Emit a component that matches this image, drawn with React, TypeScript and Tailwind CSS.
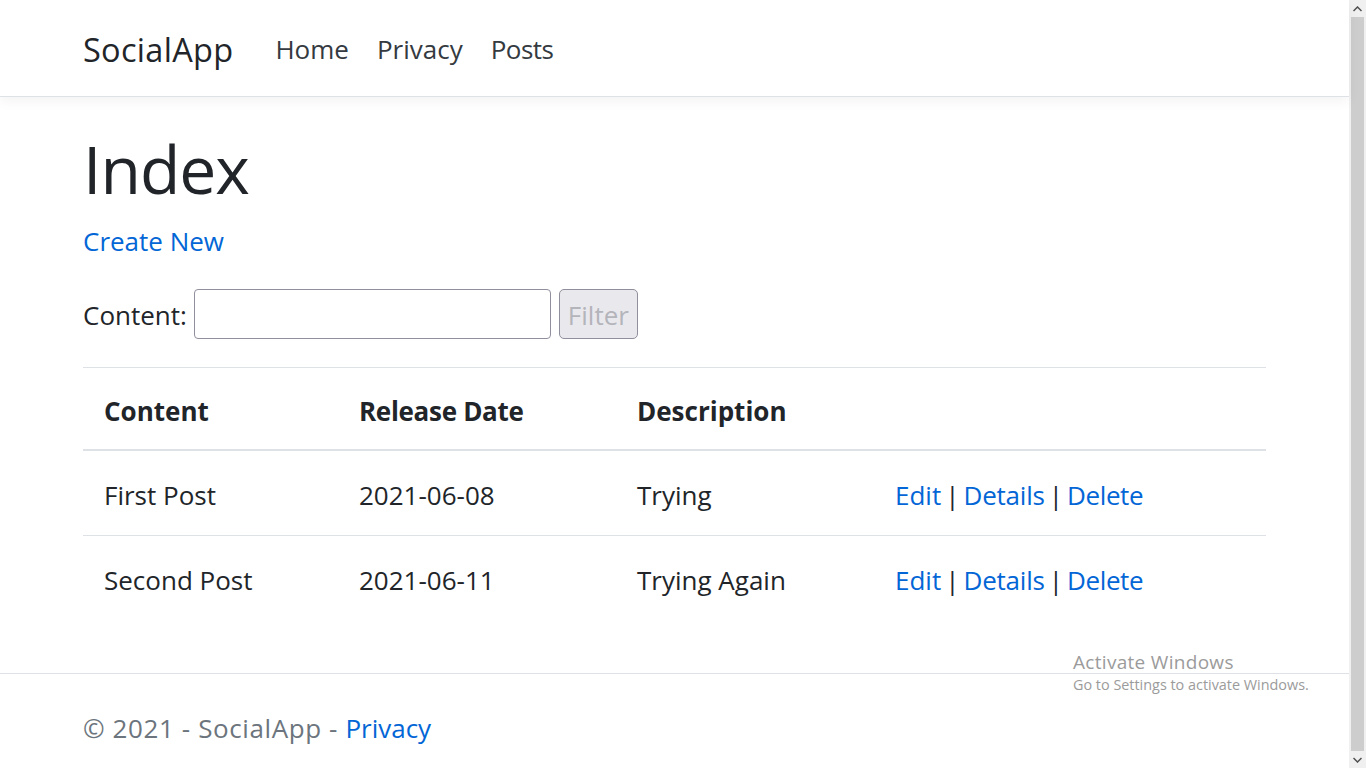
import React from 'react';

interface Post {
  content: string;
  releaseDate: string;
  description: string;
}

const posts: Post[] = [
  { content: 'First Post', releaseDate: '2021-06-08', description: 'Trying' },
  { content: 'Second Post', releaseDate: '2021-06-11', description: 'Trying Again' },
];

const font = { fontFamily: '"Open Sans", "Noto Sans", sans-serif' };

const Header: React.FC = () => (
  <header className="h-[97px] shrink-0 border-b border-[#dee2e6] shadow-[0_4px_12px_rgba(0,0,0,0.05)] bg-white">
    <nav className="h-[96px] px-[83px] pt-[2px] flex items-center">
      <a className="text-[32.5px] text-[#212529] mr-[42px] tracking-[0.3px]">SocialApp</a>
      <div className="flex items-center gap-[28px] text-[26px] text-[#343a40]">
        <a>Home</a>
        <a>Privacy</a>
        <a className="tracking-[-0.5px]">Posts</a>
      </div>
    </nav>
  </header>
);

const Actions: React.FC = () => (
  <span className="flex items-center">
    <a className="text-[#0366d6]">Edit</a>
    <span className="mx-[4px]">|</span>
    <a className="text-[#0366d6] tracking-[-0.2px]">Details</a>
    <span className="mx-[4px]">|</span>
    <a className="text-[#0366d6] tracking-[-0.4px]">Delete</a>
  </span>
);

const PostsTable: React.FC = () => (
  <div className="border-t border-[#dee2e6]">
    <div className="grid grid-cols-[255px_278px_258px_1fr] h-[83px] pt-[6px] items-center font-bold border-b-2 border-[#dee2e6]">
      <div className="pl-[21px]">Content</div>
      <div className="pl-[21px] tracking-[-0.3px]">Release Date</div>
      <div className="pl-[21px]">Description</div>
      <div />
    </div>
    {posts.map((post, index) => (
      <div
        key={index}
        className={`grid grid-cols-[255px_278px_258px_1fr] h-[84px] pt-[5px] items-center ${index > 0 ? 'border-t border-[#dee2e6]' : ''}`}
      >
        <div className="pl-[21px]">{post.content}</div>
        <div className="pl-[21px]">{post.releaseDate}</div>
        <div className="pl-[21px]">{post.description}</div>
        <div className="pl-[21px]">
          <Actions />
        </div>
      </div>
    ))}
  </div>
);

const App: React.FC = () => {
  return (
    <div className="h-[768px] w-full flex overflow-hidden bg-white text-[#212529] text-[26px] leading-[39px]" style={font}>
      <div className="flex-1 flex flex-col relative">
        <Header />

        <main className="flex-1 px-[83px] pt-[30px]">
          <h1 className="text-[66px] leading-[80px] font-normal tracking-[-1px] relative top-[1px]">Index</h1>
          <p className="mt-[15px]">
            <a className="text-[#0366d6]">Create New</a>
          </p>
          <form className="mt-[28px] flex items-center">
            <label className="mr-[7px] pt-[2px]">Content:</label>
            <input
              type="text"
              className="w-[357px] h-[50px] border border-[#8f8f9d] rounded-[4px] bg-white"
            />
            <button
              type="button"
              className="ml-[8px] w-[79px] h-[50px] border border-[#8f8f9d] rounded-[5px] bg-[#e9e9ed] text-[#b4b4bb] text-[26px] pt-[2px]"
            >
              Filter
            </button>
          </form>
          <div className="mt-[28px]">
            <PostsTable />
          </div>
        </main>

        <footer className="h-[95px] shrink-0 border-t border-[#dee2e6] px-[83px] pt-[14px] flex items-center text-[#6c757d]">
          <span>
            <span className="tracking-[0.6px]">© 2021 - SocialApp - </span>
            <a className="text-[#0366d6]">Privacy</a>
          </span>
        </footer>

        <div className="absolute left-[1073px] top-[650px] text-[#9b9b9b]" style={{ fontFamily: '"Open Sans", sans-serif' }}>
          <div className="text-[19px] leading-[24px] tracking-[0.3px]">Activate Windows</div>
          <div className="text-[14.4px] leading-[20px] mt-[1px]">Go to Settings to activate Windows.</div>
        </div>
      </div>

      <div className="w-[17px] shrink-0 flex flex-col bg-[#f0f0f0]">
        <div className="h-[17px] flex items-center justify-center">
          <svg width="9" height="6" viewBox="0 0 9 6">
            <path d="M0.5 5 L4.5 1 L8.5 5" fill="none" stroke="#505050" strokeWidth="1.5" />
          </svg>
        </div>
        <div className="flex-1 mx-[2px] bg-[#cdcdcd]" />
        <div className="h-[17px] flex items-center justify-center">
          <svg width="9" height="6" viewBox="0 0 9 6">
            <path d="M0.5 1 L4.5 5 L8.5 1" fill="none" stroke="#505050" strokeWidth="1.5" />
          </svg>
        </div>
      </div>
    </div>
  );
};

export default App;
